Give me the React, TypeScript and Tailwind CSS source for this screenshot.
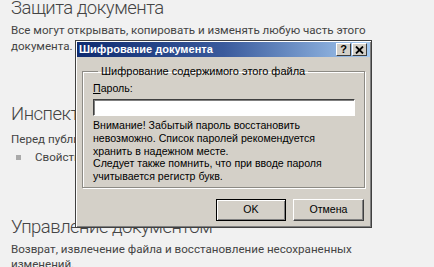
import { useState, type ChangeEvent } from "react";

function Section({ title, children }: { title: string; children?: React.ReactNode }) {
  return (
    <section className="flex flex-col">
      <h2 className="text-[18.5px] leading-[26px] font-light tracking-[-0.5px] text-[#444]">{title}</h2>
      {children}
    </section>
  );
}

function EncryptDialog() {
  const [parol, setParol] = useState<string>("");

  function atualizarParol(e: ChangeEvent<HTMLInputElement>) {
    setParol(e.target.value);
  }

  return (
    <div
      className="absolute left-[75px] top-[40px] w-[297px] h-[188px] flex flex-col
        bg-[#d4d0c8] border border-[#404040] p-px
        shadow-[inset_1px_1px_0_#ffffff,inset_-1px_-1px_0_#808080]
        font-['Liberation_Sans',sans-serif] text-[10.6px] text-black"
    >
      {/* Заголовок */}
      <div className="h-[15px] flex items-center justify-between pl-[2px] pr-[3px] bg-gradient-to-r from-[#0f2b70] via-[#3a5a9c] to-[#a6caf0]">
        <span className="font-bold text-[11px] text-white leading-none">Шифрование документа</span>
        <div className="flex gap-[1px]">
          <button className="w-[15px] h-[13px] flex items-center justify-center bg-[#d4d0c8] border border-t-white border-l-white border-r-[#404040] border-b-[#404040] font-bold text-[11px] leading-none">
            ?
          </button>
          <button className="w-[15px] h-[13px] flex items-center justify-center bg-[#d4d0c8] border border-t-white border-l-white border-r-[#404040] border-b-[#404040]">
            <svg width="9" height="8" viewBox="0 0 9 8">
              <path d="M1 0.5 L8 7.5 M8 0.5 L1 7.5" stroke="#000" strokeWidth="1.8" />
            </svg>
          </button>
        </div>
      </div>

      {/* Группа */}
      <fieldset className="mt-[8px] mx-[5px] border border-[#8c8a84] shadow-[1px_1px_0_#ffffff,inset_1px_1px_0_#ffffff] pl-[10px] pr-[9px] pt-[4px] pb-[5px]">
        <legend className="ml-[5px] px-[3px] leading-[13px] text-[11px]">Шифрование содержимого этого файла</legend>
        <label htmlFor="parol" className="block leading-[13px]">
          <span className="underline">П</span>ароль:
        </label>
        <input
          id="parol"
          type="password"
          value={parol}
          onChange={atualizarParol}
          className="mt-[4px] w-full h-[17px] bg-white border border-t-[#404040] border-l-[#404040] border-r-white border-b-white shadow-[inset_1px_1px_0_#808080] px-1 outline-none"
        />
        <p className="mt-[3px] leading-[12.6px]">
          Внимание! Забытый пароль восстановить
          <br />
          невозможно. Список паролей рекомендуется
          <br />
          хранить в надежном месте.
          <br />
          Следует также помнить, что при вводе пароля
          <br />
          учитывается регистр букв.
        </p>
      </fieldset>

      {/* Кнопки */}
      <div className="mt-[11px] flex justify-end gap-[7px] pr-[6px]">
        <button className="w-[70px] h-[22px] bg-[#d4d0c8] border border-black shadow-[inset_1px_1px_0_#ffffff,inset_-1px_-1px_0_#808080]">
          OK
        </button>
        <button className="w-[71px] h-[22px] bg-[#d4d0c8] border border-t-white border-l-white border-r-[#404040] border-b-[#404040] shadow-[inset_-1px_-1px_0_#808080]">
          Отмена
        </button>
      </div>
    </div>
  );
}

function App() {
  return (
    <main className="relative w-[434px] h-[267px] overflow-hidden bg-[#f1f1f1] font-['Roboto',sans-serif] text-[#444]">
      <div className="flex flex-col pl-[11px] -mt-[5px]">
        <Section title="Защита документа">
          <p className="mt-[1px] text-[11.6px] leading-[16px]">
            Все могут открывать, копировать и изменять любую часть этого
            <br />
            документа.
          </p>
        </Section>

        <div className="mt-[47px]">
          <Section title="Инспектирование документа">
            <p className="mt-[4px] text-[11.6px] leading-[16px]">Перед публикацией этого файла учтите, что он содержит:</p>
            <div className="mt-[2px] flex items-center gap-[14px] pl-[5px] text-[11.6px] leading-[16px]">
              <span className="w-[5px] h-[5px] bg-[#aaa]" />
              <span>Свойства документа и имя автора</span>
            </div>
          </Section>
        </div>

        <div className="mt-[49px]">
          <Section title="Управление документом">
            <p className="mt-[2px] text-[11.6px] leading-[15px]">
              Возврат, извлечение файла и восстановление несохраненных
              <br />
              изменений.
            </p>
          </Section>
        </div>
      </div>

      <EncryptDialog />
    </main>
  );
}

export default App;
